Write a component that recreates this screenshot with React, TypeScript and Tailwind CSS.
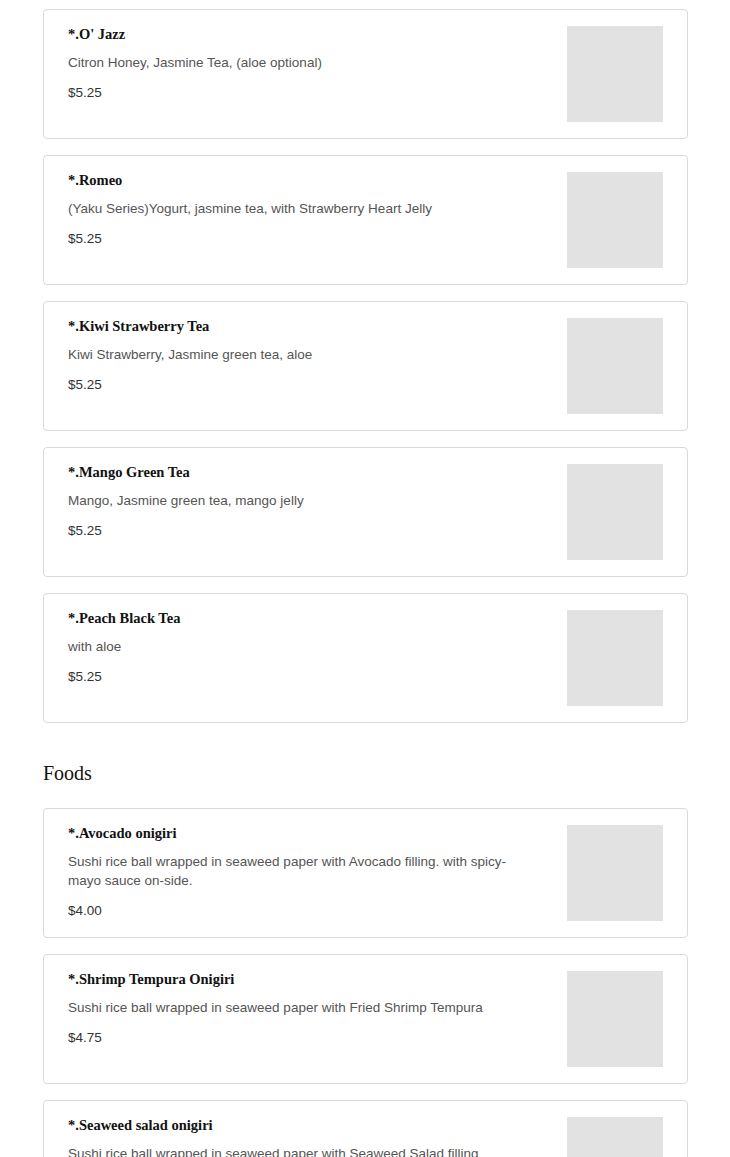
import React from "react";

type Item = { name: string; desc: string; price: string };

const drinks: Item[] = [
  { name: "*.O' Jazz", desc: "Citron Honey, Jasmine Tea, (aloe optional)", price: "$5.25" },
  { name: "*.Romeo", desc: "(Yaku Series)Yogurt, jasmine tea, with Strawberry Heart Jelly", price: "$5.25" },
  { name: "*.Kiwi Strawberry Tea", desc: "Kiwi Strawberry, Jasmine green tea, aloe", price: "$5.25" },
  { name: "*.Mango Green Tea", desc: "Mango, Jasmine green tea, mango jelly", price: "$5.25" },
  { name: "*.Peach Black Tea", desc: "with aloe", price: "$5.25" },
];

const foods: Item[] = [
  {
    name: "*.Avocado onigiri",
    desc: "Sushi rice ball wrapped in seaweed paper with Avocado filling. with spicy-mayo sauce on-side.",
    price: "$4.00",
  },
  { name: "*.Shrimp Tempura Onigiri", desc: "Sushi rice ball wrapped in seaweed paper with Fried Shrimp Tempura", price: "$4.75" },
  { name: "*.Seaweed salad onigiri", desc: "Sushi rice ball wrapped in seaweed paper with Seaweed Salad filling", price: "$4.75" },
];

function MenuCard({ item }: { item: Item }) {
  return (
    <div className="flex gap-[32px] rounded border border-[#d9d9d9] bg-white px-6 py-4">
      <div className="min-w-0 flex-1">
        <p className="font-['Liberation_Serif',serif] text-[14.5px] font-bold leading-4 text-[#111]">{item.name}</p>
        <p className="mt-[11px] font-['Liberation_Sans',sans-serif] text-[13.5px] leading-[19px] text-[#555]">{item.desc}</p>
        <p className="mt-[11px] font-['Liberation_Sans',sans-serif] text-[13.5px] leading-[19px] text-[#333]">{item.price}</p>
      </div>
      <div className="h-24 w-24 shrink-0 bg-[#e2e2e2]" />
    </div>
  );
}

export default function App() {
  return (
    <div className="min-h-screen bg-white pl-[43px] pr-[42px] pt-[9px]">
      <div className="flex flex-col gap-4">
        {drinks.map((d) => (
          <MenuCard key={d.name} item={d} />
        ))}
      </div>
      <h2 className="mt-[37px] mb-[22px] font-['Liberation_Serif',serif] text-[20px] leading-[26px] text-[#111]">Foods</h2>
      <div className="flex flex-col gap-4">
        {foods.map((f) => (
          <MenuCard key={f.name} item={f} />
        ))}
      </div>
    </div>
  );
}
